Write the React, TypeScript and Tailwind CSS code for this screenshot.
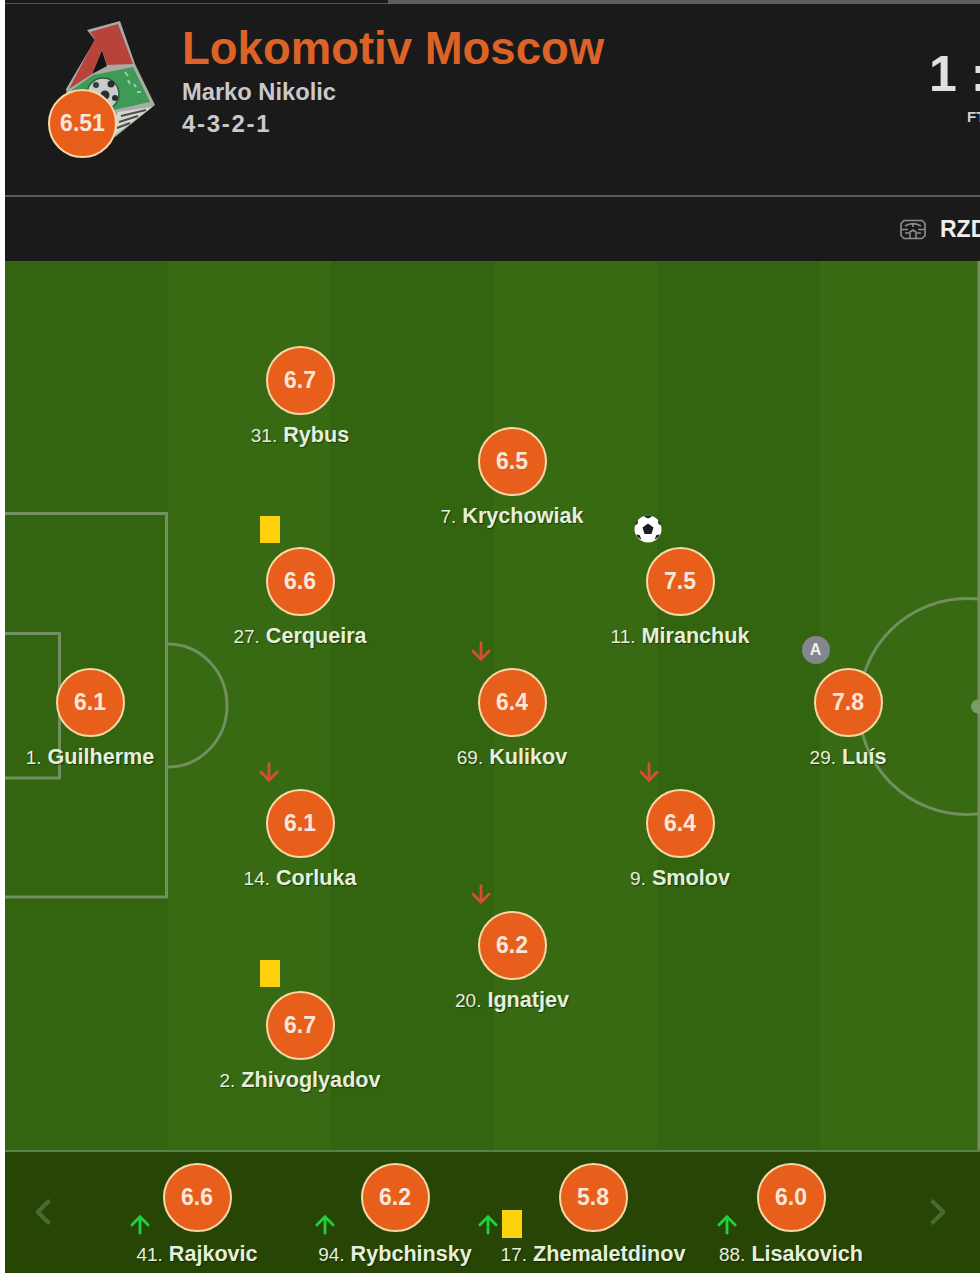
import { ArrowDown, ArrowUp, ChevronLeft, ChevronRight } from "lucide-react";

const starters = [
  { no: 1, name: "Guilherme", rating: "6.1", x: 85, y: 441 },
  { no: 31, name: "Rybus", rating: "6.7", x: 295, y: 119 },
  { no: 27, name: "Cerqueira", rating: "6.6", x: 295, y: 320, card: true },
  { no: 14, name: "Corluka", rating: "6.1", x: 295, y: 562, off: true },
  { no: 2, name: "Zhivoglyadov", rating: "6.7", x: 295, y: 764, card: true },
  { no: 7, name: "Krychowiak", rating: "6.5", x: 507, y: 200 },
  { no: 69, name: "Kulikov", rating: "6.4", x: 507, y: 441, off: true },
  { no: 20, name: "Ignatjev", rating: "6.2", x: 507, y: 684, off: true },
  { no: 11, name: "Miranchuk", rating: "7.5", x: 675, y: 320, goal: true },
  { no: 9, name: "Smolov", rating: "6.4", x: 675, y: 562, off: true },
  { no: 29, name: "Luís", rating: "7.8", x: 843, y: 441, captain: true },
];

const subs = [
  { no: 41, name: "Rajkovic", rating: "6.6", arrow: "left-[-10px]" },
  { no: 94, name: "Rybchinsky", rating: "6.2", arrow: "left-[-7px]" },
  { no: 17, name: "Zhemaletdinov", rating: "5.8", arrow: "left-[-27px]", card: true },
  { no: 88, name: "Lisakovich", rating: "6.0", arrow: "left-[-6px]" },
];

function Rating({ value }: { value: string }) {
  return (
    <div className="flex h-[69px] w-[69px] items-center justify-center rounded-full border-2 border-[#f6d9a6] bg-[#e75f1a] text-[23px] font-bold text-[#fbe6da]">
      {value}
    </div>
  );
}

function Name({ no, name }: { no: number; name: string }) {
  return (
    <div className="whitespace-nowrap text-center text-[21.6px] leading-[26px] font-bold text-[#e4f0dc] [text-shadow:1px_1px_1px_rgba(0,0,0,0.45)]">
      <span className="text-[19px] font-normal">{no}.</span> {name}
    </div>
  );
}

function Card({ className }: { className: string }) {
  return <div className={`absolute h-[27px] w-[20px] bg-[#fdd20c] ${className}`} />;
}

function Ball() {
  return (
    <svg viewBox="0 0 28 28" className="absolute left-[-12px] top-[-32px] h-[28px] w-[28px]">
      <circle cx="14" cy="14" r="13.5" fill="#fff" />
      <polygon points="14,8.5 19.5,12.5 17.5,19 10.5,19 8.5,12.5" fill="#1b1f24" />
      <path d="M10 1.500 14 3.500 18 1.500 16 .5H12Z M1.500 10.500 4 8 3.500 5 1 9Z M26.500 10.500 24 8 24.500 5 27 9Z M2 19.500 5.500 20 7.500 24.500 4 22.500Z M26 19.500 22.500 20 20.500 24.500 24 22.500Z" fill="#1b1f24" />
    </svg>
  );
}

function Player(p: (typeof starters)[number] & { card?: boolean; off?: boolean; goal?: boolean; captain?: boolean }) {
  return (
    <div className="absolute flex w-0 flex-col items-center" style={{ left: p.x, top: p.y - 34 }}>
      <div className="relative">
        {p.card && <Card className="left-[-6px] top-[-31px]" />}
        {p.off && <ArrowDown className="absolute left-[-11px] top-[-31px] h-[28px] w-[28px] text-[#d94f2d]" strokeWidth={2.4} />}
        {p.goal && <Ball />}
        {p.captain && (
          <div className="absolute left-[-12px] top-[-32px] flex h-[28px] w-[28px] items-center justify-center rounded-full bg-[#85858f] text-[16px] font-bold text-[#eeeeee]">
            A
          </div>
        )}
        <Rating value={p.rating} />
      </div>
      <div className="mt-[7px]">
        <Name no={p.no} name={p.name} />
      </div>
    </div>
  );
}

function Logo() {
  return (
    <svg viewBox="45 15 115 125" className="absolute left-[40px] top-[11px] h-[125px] w-[115px]">
      <polygon points="87,30 120,21 135,64 155,105 115,137 70,115 66,89 95,40" fill="#a9aba5" />
      <polygon points="102,50 107,66 92,74" fill="#141414" />
      <polygon points="90,32 118,24 133,64 107,65 102,50 92,74 69,89 95,39" fill="#b8433b" />
      <polygon points="72,90 93,75 133,67 150,102 118,109 90,118 72,112" fill="#3f9a57" />
      <path d="M125 72 128 76M134 84 136 87M137 92 141 92M128 80 130 84" stroke="#8fd3a0" strokeWidth="2" />
      <polygon points="118,112 152,107 115,135 112,124" fill="#d5d7d1" />
      <path d="M121 116 146 110M119 122 138 116M117 128 130 123" stroke="#4a4f4c" strokeWidth="2" />
      <circle cx="103" cy="94" r="16" fill="#c9ccc8" stroke="#2f5d3c" strokeWidth="1.500" />
      <circle cx="105" cy="95" r="4.500" fill="#2a2d2b" />
      <circle cx="96" cy="85" r="3" fill="#3a3d3b" />
      <circle cx="111" cy="84" r="3.500" fill="#2a2d2b" />
      <circle cx="115" cy="98" r="3" fill="#2a2d2b" />
    </svg>
  );
}

function Stadium() {
  return (
    <svg viewBox="0 0 26 21" fill="none" stroke="#8e8e8e" strokeWidth="1.600" className="h-[21px] w-[26px] shrink-0">
      <path d="M4 1.500h18l3 3v12l-3 3H4l-3-3v-12Z" />
      <path d="M5 7c5-3 11-3 16 0M1.500 10.500H8M18 10.500h6.500M5 14h4M17 14h4M10 19v-6l3-2 3 2v6M13 5v3" />
    </svg>
  );
}

function Markings() {
  return (
    <svg viewBox="0 0 975 889" fill="none" stroke="#718f5f" className="absolute inset-0 h-full w-full">
      <g strokeWidth="3">
        <path d="M0 252.500H161.500V636H0" />
        <path d="M0 372.500H54.500V517H0" />
        <path d="M163 383A59 61.500 0 0 1 163 506" />
        <circle cx="962" cy="445.500" r="108" />
        <path d="M974 0V889" />
      </g>
      <circle cx="973" cy="445.500" r="7" fill="#7d9a6b" stroke="none" />
    </svg>
  );
}

export default function App() {
  return (
    <div className="h-[1273px] w-[980px] overflow-hidden bg-white pl-[5px] font-['Liberation_Sans',Arial,sans-serif]">
      <div className="flex h-[4px]">
        <div className="w-[383px] border-b border-[#555555] bg-[#1a1a1a]" />
        <div className="flex-1 bg-[#5d5d5d]" />
      </div>

      <header className="relative flex h-[193px] border-b-2 border-[#5b5b5b] bg-[#1a1a1a]">
        <Logo />
        <div className="absolute left-[43px] top-[85px]">
          <Rating value="6.51" />
        </div>
        <div className="ml-[177px] w-[747px] shrink-0 pt-[19px]">
          <h1 className="text-[45.500px] leading-[52px] font-bold text-[#dd6228]">Lokomotiv Moscow</h1>
          <p className="mt-[1px] text-[23.700px] leading-[32px] font-bold text-[#c9c9c9]">Marko Nikolic</p>
          <p className="text-[24px] leading-[31px] font-bold tracking-[1.700px] text-[#c9c9c9]">4-3-2-1</p>
        </div>
        <div className="shrink-0 whitespace-nowrap pt-[41px]">
          <div className="text-[50px] leading-[58px] font-bold text-[#e0e0e0]">1 : 1</div>
          <div className="mt-[5px] pl-[38px] text-[15px] leading-[18px] font-bold text-[#d0d0d0]">FT</div>
        </div>
      </header>

      <div className="flex h-[64px] items-center gap-[14px] whitespace-nowrap bg-[#1a1a1a] pl-[895px]">
        <Stadium />
        <span className="text-[23px] font-bold text-[#eeeeee]">RZD Arena</span>
      </div>

      <main className="relative h-[889px] bg-[repeating-linear-gradient(90deg,#33640f_0,#33640f_163px,#376a13_163px,#376a13_326px)]">
        <Markings />
        {starters.map((p) => (
          <Player key={p.no} {...p} />
        ))}
      </main>

      <footer className="relative h-[123px] border-t-2 border-[#5e7d4c] bg-[#274505] pl-[93px] pt-[11px]">
        <ChevronLeft className="absolute left-[17px] top-[39px] h-[42px] w-[42px] text-[#4b6a33]" strokeWidth={2.4} />
        <ChevronRight className="absolute left-[912px] top-[39px] h-[42px] w-[42px] text-[#4b6a33]" strokeWidth={2.4} />
        <div className="grid w-[792px] grid-cols-4">
          {subs.map((s) => (
            <div key={s.no} className="flex flex-col items-center">
              <Rating value={s.rating} />
              <div className="relative mt-[9px]">
                <ArrowUp className={`absolute top-[-30px] h-[28px] w-[28px] text-[#1fd13f] ${s.arrow}`} strokeWidth={2.4} />
                {s.card && <Card className="left-[1px] top-[-31px] h-[28px]" />}
                <Name no={s.no} name={s.name} />
              </div>
            </div>
          ))}
        </div>
      </footer>
    </div>
  );
}
